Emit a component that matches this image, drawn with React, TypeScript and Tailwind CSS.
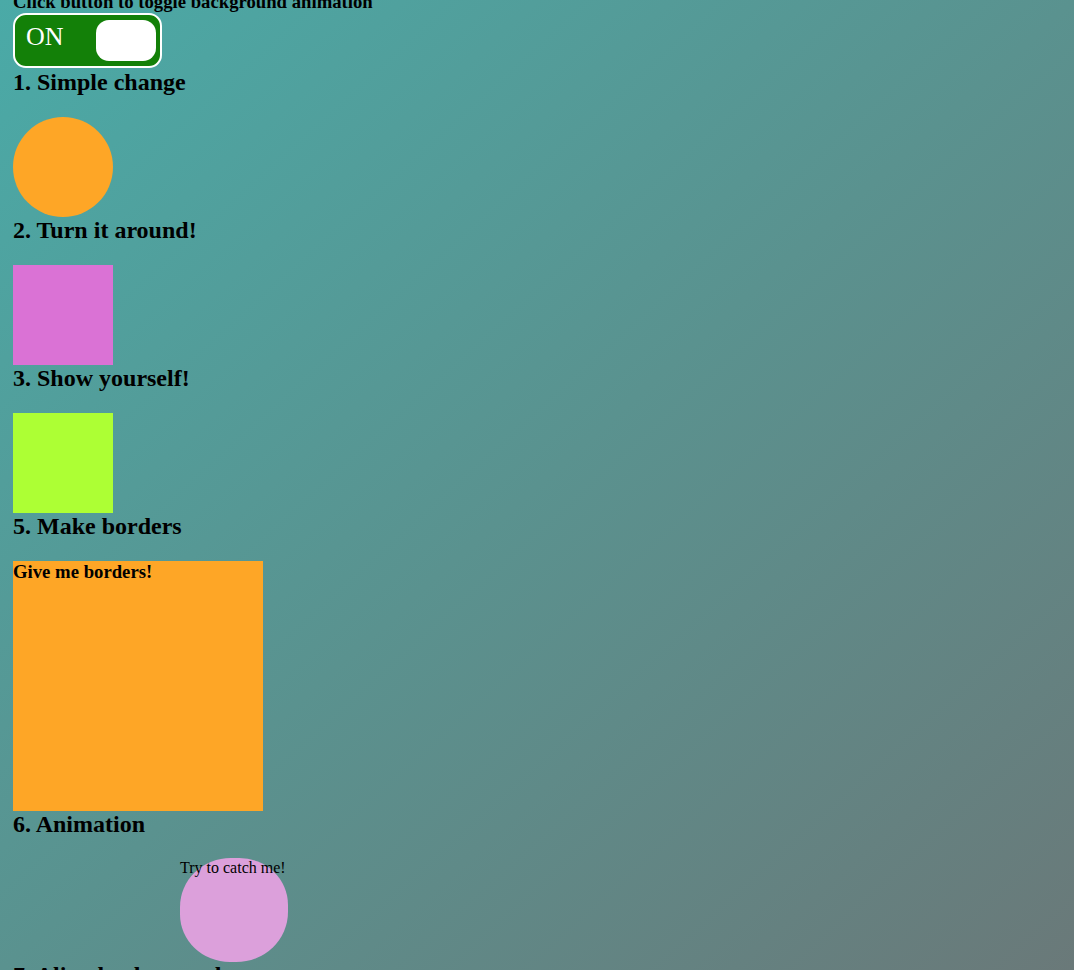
export default function App() {
  return (
    <div
      className="h-[970px] w-full overflow-hidden bg-[linear-gradient(to_bottom_right,#4aaaa7_0%,#5a928f_50%,#6a7979_100%)] pl-[13px] text-black"
      style={{ fontFamily: '"Liberation Serif", "Times New Roman", serif' }}
    >
      <div className="-mt-[9px]">
        <h3 className="text-[18.72px] font-bold leading-[21.5px]">
          Click button to toggle background animation
        </h3>

        <button className="mt-[0.5px] flex h-[55px] w-[149px] items-center justify-between rounded-[13px] border-2 border-white bg-[#138008] pl-[11px] pr-[4px]">
          <span className="pb-[8px] text-[26px] leading-none text-white">ON</span>
          <span className="h-[41px] w-[60px] rounded-[13px] bg-white" />
        </button>

        <h2 className="text-[24px] font-bold leading-[28px]">1. Simple change</h2>
        <div className="mt-[21px] h-[100px] w-[100px] rounded-full bg-[#fea626]" />

        <h2 className="text-[24px] font-bold leading-[27px]">2. Turn it around!</h2>
        <div className="mt-[21px] h-[100px] w-[100px] bg-[#da72d5]" />

        <h2 className="text-[24px] font-bold leading-[27px]">3. Show yourself!</h2>
        <div className="mt-[21px] h-[100px] w-[100px] bg-[#adff34]" />

        <h2 className="text-[24px] font-bold leading-[27px]">5. Make borders</h2>
        <div className="mt-[21px] h-[250px] w-[250px] bg-[#fea626]">
          <h3 className="text-[18.72px] font-bold leading-[21px]">Give me borders!</h3>
        </div>

        <h2 className="text-[24px] font-bold leading-[27px]">6. Animation</h2>
        <div className="mt-[20px] h-[104px] pl-[167px]">
          <div className="h-[104px] w-[108px] rounded-[47%_45%_48%_46%] bg-[#dca0db] pt-[1px] text-[16px] leading-[18px]">
            Try to catch me!
          </div>
        </div>

        <h2 className="text-[24px] font-bold leading-[27px]">7. Align background</h2>
      </div>
    </div>
  );
}
